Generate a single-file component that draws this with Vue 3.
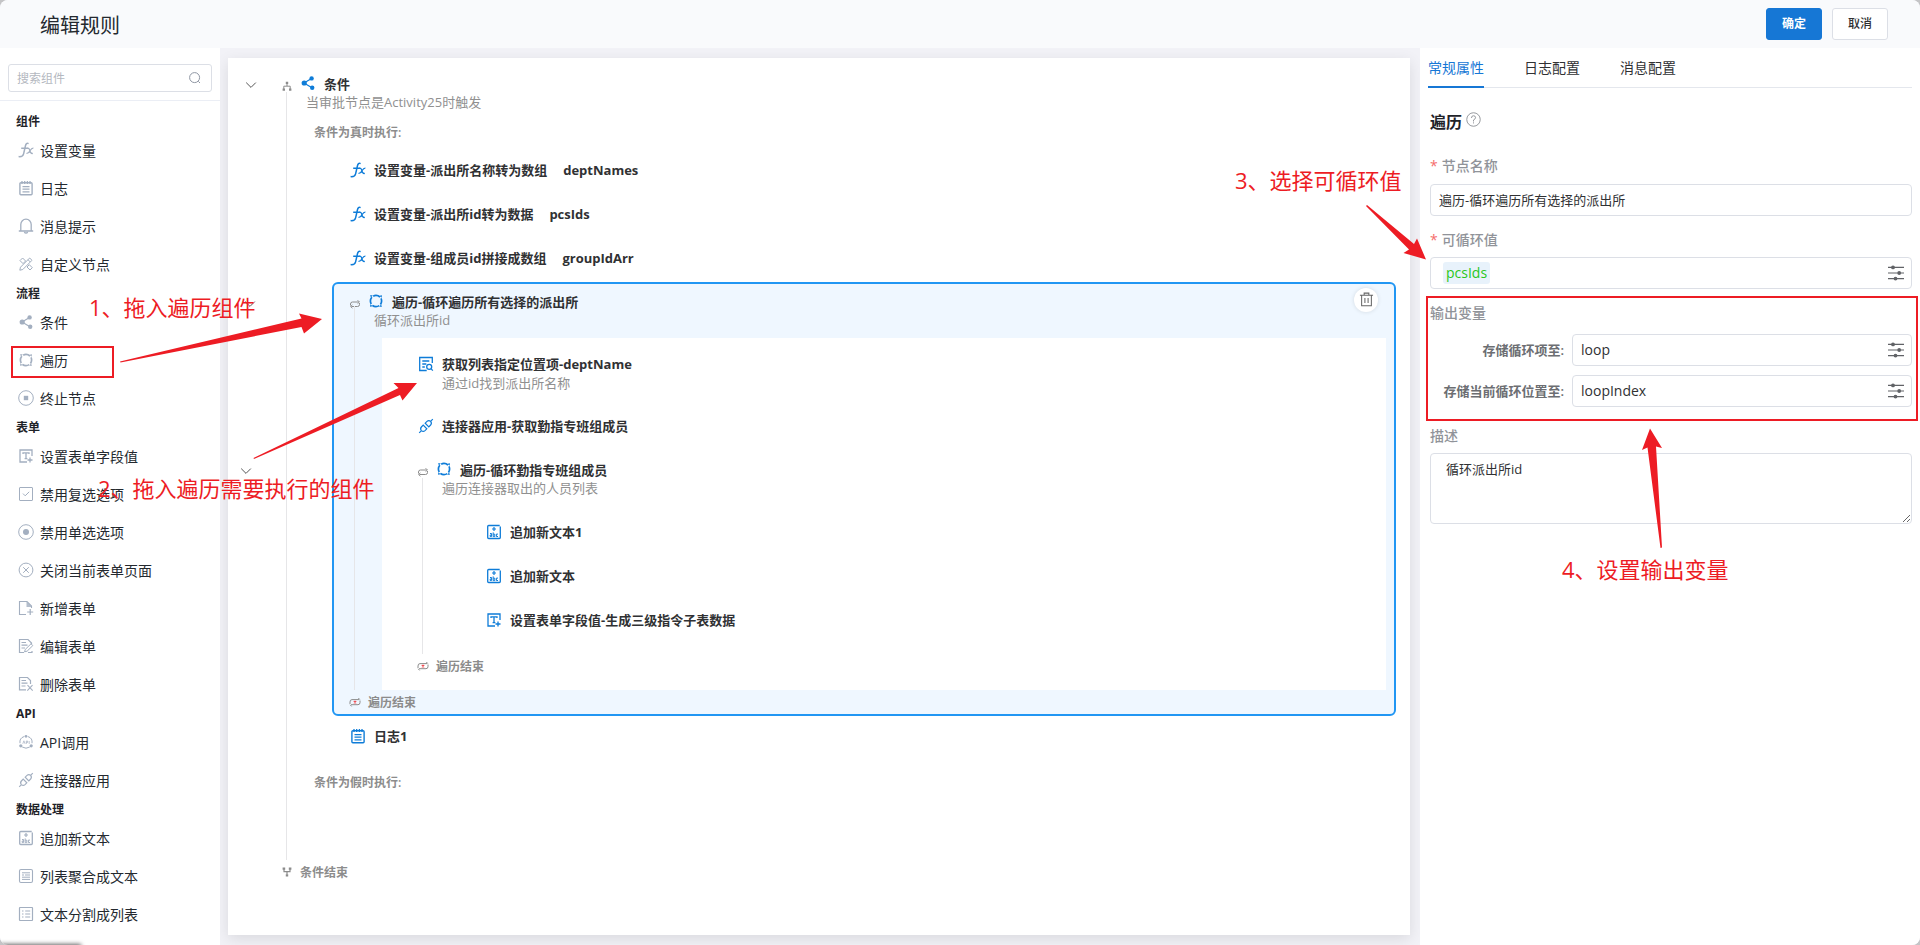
<script setup>
import { ref } from 'vue'

const groups = [
  { title: '组件', items: [
    { icon: 'fx', label: '设置变量' },
    { icon: 'log', label: '日志' },
    { icon: 'bell', label: '消息提示' },
    { icon: 'custom', label: '自定义节点' },
  ] },
  { title: '流程', items: [
    { icon: 'share', label: '条件' },
    { icon: 'loop', label: '遍历' },
    { icon: 'stop', label: '终止节点' },
  ] },
  { title: '表单', items: [
    { icon: 'field', label: '设置表单字段值' },
    { icon: 'check', label: '禁用复选选项' },
    { icon: 'radio', label: '禁用单选选项' },
    { icon: 'close', label: '关闭当前表单页面' },
    { icon: 'formadd', label: '新增表单' },
    { icon: 'formedit', label: '编辑表单' },
    { icon: 'formdel', label: '删除表单' },
  ] },
  { title: 'API', items: [
    { icon: 'api', label: 'API调用' },
    { icon: 'link', label: '连接器应用' },
  ] },
  { title: '数据处理', items: [
    { icon: 'append', label: '追加新文本' },
    { icon: 'list', label: '列表聚合成文本' },
    { icon: 'split', label: '文本分割成列表' },
  ] },
]

const variables = [
  { label: '设置变量-派出所名称转为数组', name: 'deptNames' },
  { label: '设置变量-派出所id转为数据', name: 'pcsIds' },
  { label: '设置变量-组成员id拼接成数组', name: 'groupIdArr' },
]
const innerSteps = [
  { icon: 'append', label: '追加新文本1' },
  { icon: 'append', label: '追加新文本' },
  { icon: 'field', label: '设置表单字段值-生成三级指令子表数据' },
]
const tabs = ['常规属性', '日志配置', '消息配置']
const active = ref(0)
const keyword = ref('')
const nodeName = ref('遍历-循环遍历所有选择的派出所')
const loopVar = ref('loop')
const indexVar = ref('loopIndex')
const desc = ref('循环派出所id')
</script>

<template>
  <div class="app">
    <svg class="defs" aria-hidden="true">
      <symbol id="fx" viewBox="0 0 16 16">
        <path d="M10.6 1.6C8.9.8 7.9 1.8 7.4 4L5.6 11.8C5.1 14 3.9 15 .6 14.6M3.2 6.2h6.6" fill="none" stroke="currentColor" stroke-width="1.5" />
        <path d="M9.2 6.4c1.6-.5 2.1.4 2.6 2.2.5 2 .9 3.3 3 2.8M15.4 6.2c-1.6-.2-2.3.9-3.4 2.6-1 1.7-1.9 2.8-3.5 2.6" fill="none" stroke="currentColor" stroke-width="1.3" />
      </symbol>
      <symbol id="log" viewBox="0 0 16 16">
        <rect x="1.9" y="2.7" width="12.2" height="12" rx="1" fill="none" stroke="currentColor" stroke-width="1.4" />
        <path d="M4 1v3M6.7 1v3M9.4 1v3M12 1v3M4.5 6.7h7M4.5 9.2h7M4.5 11.8h7" fill="none" stroke="currentColor" stroke-width="1.3" />
      </symbol>
      <symbol id="bell" viewBox="0 0 16 16">
        <path d="M.8 13h14.4M2.8 13V6.500a5.2 5.400 0 0 1 10.4 0v6.500M6.2 14.2q1.8 1.6 3.6 0" fill="none" stroke="currentColor" stroke-width="1.3" />
      </symbol>
      <symbol id="custom" viewBox="0 0 16 16">
        <path d="M1.8 14.2l.7-3L11.7 2l2.3 2.3-9.2 9.2zM10 3.7L12.3 6M2 4.6L4.6 2l3 3L5 7.6zM9 11l2.3-2.3 3 3-2.3 2.3z" fill="none" stroke="currentColor" stroke-width="1" />
      </symbol>
      <symbol id="share" viewBox="0 0 16 16">
        <path d="M12 3.2L4 8l8.4 5" fill="none" stroke="currentColor" stroke-width="1.2" />
        <circle cx="4.2" cy="8" r="2.6" fill="currentColor" /><circle cx="11.6" cy="3.4" r="2.2" fill="currentColor" /><circle cx="12.2" cy="12.7" r="2.2" fill="currentColor" />
      </symbol>
      <symbol id="loop" viewBox="0 0 16 16">
        <circle cx="8" cy="8" r="5.6" fill="none" stroke="currentColor" stroke-width="1.7" stroke-dasharray="7.2 1.6" stroke-dashoffset="3.6" />
        <path d="M2.200 2l2.600.4L2.800 4.600zM14 2.200l-.4 2.600-2.200-2zM13.800 14l-2.600-.4 2-2.200zM2 13.800l.4-2.600 2.200 2z" fill="currentColor" />
      </symbol>
      <symbol id="stop" viewBox="0 0 16 16">
        <circle cx="8" cy="8" r="7.3" fill="none" stroke="currentColor" stroke-width="1" /><rect x="5.8" y="5.8" width="4.4" height="4.4" fill="currentColor" />
      </symbol>
      <symbol id="radio" viewBox="0 0 16 16">
        <circle cx="8" cy="8" r="7.3" fill="none" stroke="currentColor" stroke-width="1" /><circle cx="8" cy="8" r="3" fill="currentColor" />
      </symbol>
      <symbol id="close" viewBox="0 0 16 16">
        <circle cx="8" cy="8" r="6.9" fill="none" stroke="currentColor" stroke-width="1" /><path d="M5.2 5.2l5.6 5.6M10.8 5.2l-5.6 5.6" stroke="currentColor" stroke-width="1" />
      </symbol>
      <symbol id="check" viewBox="0 0 16 16">
        <rect x="1.5" y="1.5" width="13" height="13" rx=".5" fill="none" stroke="currentColor" stroke-width="1" /><path d="M5 7.6l2.2 2.2 4-4" fill="none" stroke="currentColor" stroke-width="1" />
      </symbol>
      <symbol id="field" viewBox="0 0 16 16">
        <path d="M14 8V2H2v12h7M5 6V4.8h6V6M8 5v5.5M6.6 10.6h2.8" fill="none" stroke="currentColor" stroke-width="1.3" />
        <path d="M12 9.5v5M9.5 12h5" stroke="currentColor" stroke-width="1.3" />
      </symbol>
      <symbol id="formadd" viewBox="0 0 16 16">
        <path d="M13.5 8V6L9 1.5H1.5v13H8" fill="none" stroke="currentColor" stroke-width="1.1" /><path d="M8.5 1.5L14 7H8.5z" fill="currentColor" opacity=".8" /><path d="M12.2 9v6M9.2 12h6" stroke="currentColor" stroke-width="1.2" />
      </symbol>
      <symbol id="formedit" viewBox="0 0 16 16">
        <path d="M13.5 6V5L10 1.5H1.5v13H6M14 13v1.5h-4M3.5 4.5H8M3.5 7.2h6M3.5 10h3.5" fill="none" stroke="currentColor" stroke-width="1.2" /><path d="M6.5 13.8l.8-2.4L13 5.8l1.8 1.8-5.7 5.6z" fill="none" stroke="currentColor" stroke-width="1" />
      </symbol>
      <symbol id="formdel" viewBox="0 0 16 16">
        <path d="M12.5 8V4.5L9.5 1.5h-8v12.4H8M3.5 4.5H8M3.5 7.2h6M3.5 10h4" fill="none" stroke="currentColor" stroke-width="1.2" /><path d="M9.5 9.2l5.2 5.4M14.5 9.2l-5.2 5.4" stroke="currentColor" stroke-width="1.1" />
      </symbol>
      <symbol id="api" viewBox="0 0 16 16">
        <path d="M6 2.6a6 6 0 0 0-4 6.6M10 2.6a6 6 0 0 1 4 6.6M4.2 13q3.8 2.4 7.6 0" fill="none" stroke="currentColor" stroke-width="1" />
        <circle cx="8" cy="2.3" r="1.4" fill="currentColor" /><circle cx="2.8" cy="11.8" r="1.6" fill="currentColor" /><circle cx="13.2" cy="11.8" r="1.6" fill="currentColor" />
        <path d="M4.8 9.8l1.1-3 1.1 3M8.3 10V7h1.3v1.5H8.3M11.2 7v3" fill="none" stroke="currentColor" stroke-width=".7" />
      </symbol>
      <symbol id="link" viewBox="0 0 16 16">
        <path d="M1.200 14.800l2-2M12.800 3.200l2-2M3.400 12.600a2.700 2.700 0 0 1 0-3.600l1.800-1.800 3.600 3.600-1.800 1.800a2.700 2.700 0 0 1-3.600 0zM12.600 3.400a2.700 2.700 0 0 1 0 3.600l-1.800 1.800-3.600-3.600L9 3.400a2.700 2.700 0 0 1 3.600 0z" fill="none" stroke="currentColor" stroke-width="1.200" />
      </symbol>
      <symbol id="append" viewBox="0 0 16 16">
        <path d="M14.3 2.5v11q0 1-1 1H2.7q-1 0-1-1v-11q0-1 1-1h11" fill="none" stroke="currentColor" stroke-width="1.3" />
        <path d="M8 3v4M6 5h4" stroke="currentColor" stroke-width="1.2" /><path d="M4 9.5h1.6v3H4.2V11h1.4M7.2 8.4v4.2h1.6v-2.4H7.4M12 10.1h-1.6v2.4H12" fill="none" stroke="currentColor" stroke-width="1" />
      </symbol>
      <symbol id="list" viewBox="0 0 16 16">
        <rect x="1.5" y="1.5" width="13" height="13" rx="1.5" fill="none" stroke="currentColor" stroke-width="1.1" /><path d="M4 4.8h8M4 7h2M7 7h5M4 9.2h8M4 11.4h8" stroke="currentColor" stroke-width="1" />
      </symbol>
      <symbol id="split" viewBox="0 0 16 16">
        <rect x="1.5" y="1.5" width="13" height="13" rx=".5" fill="none" stroke="currentColor" stroke-width="1.2" /><path d="M4 5h1.5M7.2 5h5M4 8h1.5M7.2 8h5M4 11h1.5M7.2 11h5" stroke="currentColor" stroke-width="1.2" />
      </symbol>
      <symbol id="find" viewBox="0 0 16 16">
        <path d="M14.3 7V1.5H1.7v13h7M4.3 5h7M4.3 8h4M4.3 11h2.5" fill="none" stroke="currentColor" stroke-width="1.3" /><circle cx="11.2" cy="10.8" r="2.5" fill="none" stroke="currentColor" stroke-width="1.3" /><path d="M13 12.6l1.8 2" stroke="currentColor" stroke-width="1.3" />
      </symbol>
      <symbol id="repeat" viewBox="0 0 12 12">
        <path d="M1.5 7.5V6q0-2 2-2h6M8.6 2.2L10.4 4 8.6 5.6M10.5 5v1.5q0 2-2 2h-6M3.4 6.9L1.6 8.5l1.8 1.7" fill="none" stroke="#8c8c8c" stroke-width="1" />
      </symbol>
      <symbol id="repeatend" viewBox="0 0 12 12">
        <path d="M1 8V6q0-2.400 2-2.400h7M9.400 2l1.400 1.600M11 4.500v2q0 2.200-2 2.200H2M2.600 10.400L1.200 8.800" fill="none" stroke="#8c8c8c" stroke-width="1" /><path d="M4.800 5l2.400 2.400M7.200 5L4.800 7.400" stroke="#f0494e" stroke-width="1.1" />
      </symbol>
      <symbol id="branch" viewBox="0 0 12 12">
        <path d="M6 3v3M2.8 9V6.2h6.4V9" fill="none" stroke="#8c8c8c" stroke-width="1" /><path d="M4.8 1.8h2.4V4H4.8zM1.6 8.6H4v2.2H1.6zM8 8.6h2.4v2.2H8z" fill="#8c8c8c" />
      </symbol>
      <symbol id="merge" viewBox="0 0 12 12">
        <path d="M3 3v2.600h6V3M6 5.600v3" fill="none" stroke="#8c8c8c" stroke-width="1.2" /><path d="M1.600 1.6h2.6v2.2H1.600zM7.800 1.6h2.6v2.2H7.800zM4.8 8.2h2.4v2.2H4.8z" fill="#8c8c8c" />
      </symbol>
      <symbol id="sliders" viewBox="0 0 16 16">
        <path d="M0 2.4h16M0 8h16M0 13.6h16" stroke="#606266" stroke-width="1.2" /><circle cx="5" cy="2.4" r="1.9" fill="#606266" /><circle cx="11.2" cy="8" r="1.9" fill="#606266" /><circle cx="7.5" cy="13.6" r="1.9" fill="#606266" />
      </symbol>
      <symbol id="chevron" viewBox="0 0 12 12"><path d="M1.2 3.6L6 8.4l4.8-4.8" fill="none" stroke="#555" stroke-width="1" /></symbol>
    </svg>

    <header class="top">
      <h1>编辑规则</h1>
      <div class="actions">
        <button class="btn primary">确定</button>
        <button class="btn">取消</button>
      </div>
    </header>

    <div class="main">
      <aside class="side">
        <div class="searchwrap">
          <div class="search">
            <input v-model="keyword" placeholder="搜索组件" aria-label="搜索组件" />
            <svg viewBox="0 0 12 12"><circle cx="5.6" cy="5.6" r="5" fill="none" stroke="#8f96a3" /><path d="M9.300 9.300l1.700 1.700" stroke="#8f96a3" /></svg>
          </div>
        </div>
        <nav class="groups">
          <section v-for="g in groups" :key="g.title">
            <h2>{{ g.title }}</h2>
            <ul>
              <li v-for="i in g.items" :key="i.label"><svg><use :href="'#' + i.icon" /></svg>{{ i.label }}</li>
            </ul>
          </section>
        </nav>
      </aside>

      <main class="canvas">
        <div class="board">
          <svg class="fold f1"><use href="#chevron" /></svg>
          <svg class="fold f2"><use href="#chevron" /></svg>
          <svg class="fold f3"><use href="#chevron" /></svg>
          <div class="block">
            <div class="head">
              <svg class="mark"><use href="#branch" /></svg>
              <div class="title"><svg><use href="#share" /></svg>条件</div>
              <p>当审批节点是Activity25时触发</p>
            </div>
            <div class="rail">
              <div class="cond">条件为真时执行:</div>
              <div class="kids">
                <div v-for="v in variables" :key="v.name" class="leaf">
                  <svg><use href="#fx" /></svg><span>{{ v.label }}</span><span class="var">{{ v.name }}</span>
                </div>
                <div class="block selected">
                  <button class="del" aria-label="删除">
                    <svg viewBox="0 0 16 16"><path d="M1 3.5h14M5.5 3V1.2h5V3M2.8 3.5v11.2h10.4V3.5M6.3 6.3v5.4M9.7 6.3v5.4" fill="none" stroke="#666" stroke-width="1.1" /></svg>
                  </button>
                  <div class="head">
                    <svg class="mark"><use href="#repeat" /></svg>
                    <div class="title"><svg><use href="#loop" /></svg>遍历-循环遍历所有选择的派出所</div>
                    <p>循环派出所id</p>
                  </div>
                  <div class="rail">
                    <div class="body">
                      <div class="leaf tall">
                        <svg><use href="#find" /></svg><span>获取列表指定位置项-deptName</span>
                        <p>通过id找到派出所名称</p>
                      </div>
                      <div class="leaf"><svg><use href="#link" /></svg><span>连接器应用-获取勤指专班组成员</span></div>
                      <div class="block">
                        <div class="head">
                          <svg class="mark"><use href="#repeat" /></svg>
                          <div class="title"><svg><use href="#loop" /></svg>遍历-循环勤指专班组成员</div>
                          <p>遍历连接器取出的人员列表</p>
                        </div>
                        <div class="rail">
                          <div class="kids inner">
                            <div v-for="s in innerSteps" :key="s.label" class="leaf"><svg><use :href="'#' + s.icon" /></svg><span>{{ s.label }}</span></div>
                          </div>
                        </div>
                        <div class="end"><svg><use href="#repeatend" /></svg>遍历结束</div>
                      </div>
                    </div>
                  </div>
                  <div class="end"><svg><use href="#repeatend" /></svg>遍历结束</div>
                </div>
                <div class="leaf"><svg><use href="#log" /></svg><span>日志1</span></div>
              </div>
              <div class="cond false">条件为假时执行:</div>
            </div>
            <div class="end"><svg><use href="#merge" /></svg>条件结束</div>
          </div>
        </div>
      </main>

      <aside class="props">
        <div class="tabs" role="tablist">
          <button v-for="(t, n) in tabs" :key="t" role="tab" :aria-selected="active === n" :class="{ on: active === n }" @click="active = n">{{ t }}</button>
        </div>
        <h2 class="ptitle">遍历<svg viewBox="0 0 16 16"><circle cx="8" cy="8" r="7.2" fill="none" stroke="#909399" /><path d="M5.8 6.4Q5.8 4 8 4t2.2 2.1Q10.2 7.300 8 8.500v1.600M8 11v1.200" fill="none" stroke="#909399" /></svg></h2>
        <label class="lab" for="nodename"><i>*</i>节点名称</label>
        <div class="box"><input id="nodename" v-model="nodeName" class="small" /></div>
        <div class="lab second"><i>*</i>可循环值</div>
        <div class="box"><span class="tag">pcsIds</span><svg><use href="#sliders" /></svg></div>
        <div class="output">
          <div class="lab">输出变量</div>
          <div class="row"><label for="v1">存储循环项至:</label><div class="box"><input id="v1" v-model="loopVar" /><svg><use href="#sliders" /></svg></div></div>
          <div class="row"><label for="v2">存储当前循环位置至:</label><div class="box"><input id="v2" v-model="indexVar" /><svg><use href="#sliders" /></svg></div></div>
        </div>
        <label class="lab" for="desc">描述</label>
        <textarea id="desc" v-model="desc"></textarea>
      </aside>
    </div>

    <div class="notes left">
      <svg viewBox="0 0 480 600">
        <rect x="12" y="347" width="101" height="30" fill="none" stroke="#ed1c24" stroke-width="2" />
        <path d="M120 361.500L301.500 318.500 299 313.500 322 319 304 333.500 301.500 327 120.500 362.500z" fill="#ed1c24" />
        <path d="M253.500 458L398.500 388 393.500 383 417 383 402.500 400.500 400 395 254 459z" fill="#ed1c24" />
      </svg>
      <span class="n1">1、拖入遍历组件</span>
      <span class="n2">2、拖入遍历需要执行的组件</span>
    </div>
    <div class="notes right">
      <svg viewBox="1220 0 700 600">
        <path d="M1367 205L1414 244 1417 238.500 1426 259.500 1403.500 253 1409 249.500 1366 206z" fill="#ed1c24" />
        <path d="M1650 428.500L1662 448 1656 446.500 1662 547.500 1660.500 548 1647.500 447.500 1642 450z" fill="#ed1c24" />
      </svg>
      <span class="n3">3、选择可循环值</span>
      <span class="n4">4、设置输出变量</span>
    </div>
    <div class="status"></div>
  </div>
</template>

<style>
body { background: #c4c4c6; }
</style>

<style scoped>
* { box-sizing: border-box; margin: 0; padding: 0; }
.app {
  position: relative;
  display: flex;
  flex-direction: column;
  height: 100vh;
  overflow: hidden;
  border-radius: 8px;
  background: #f2f2f7;
  color: #303133;
  font-family: "Open Sans", "Noto Sans CJK SC", sans-serif;
  font-size: 14px;
}
.defs { position: absolute; width: 0; height: 0; }
button, input, textarea { font: inherit; color: inherit; outline: none; }
ul { list-style: none; }

.top { display: flex; align-items: center; justify-content: space-between; flex: none; height: 48px; padding: 0 32px 0 40px; background: #f9fafc; }
.top h1 { font-size: 20px; font-weight: 400; color: #24292f; }
.actions { display: flex; gap: 10px; }
.btn { width: 56px; height: 32px; border: 1px solid #dcdfe6; border-radius: 3px; background: #fff; font-size: 12px; font-weight: 500; line-height: 30px; }
.btn.primary { border-color: #1677d5; background: #1677d5; color: #fff; font-weight: 700; }

.main { display: flex; flex: 1; min-height: 0; }
.side { flex: none; width: 220px; background: #fff; overflow: hidden; }
.searchwrap { padding: 16px 8px 8px; border-bottom: 1px solid #ebeef5; }
.search { display: flex; align-items: center; height: 28px; padding: 0 10px 0 8px; border: 1px solid #dcdfe6; border-radius: 3px; }
.search input { flex: 1; min-width: 0; border: 0; font-size: 12px; background: none; }
.search input::placeholder { color: #b4b8c0; opacity: 1; }
.search svg { width: 12px; height: 12px; }
.groups { padding-top: 11px; }
.groups h2 { height: 20px; padding-left: 16px; font-size: 12px; font-weight: 700; line-height: 20px; color: #1f2329; }
.groups li { display: flex; align-items: center; gap: 6px; height: 38px; padding: 0 0 2px 18px; color: #24292f; }
.groups li svg { width: 16px; height: 16px; color: #a3afc0; }

.canvas { flex: 1; min-width: 0; padding: 10px 10px 10px 8px; overflow: hidden; }
.board { position: relative; height: 100%; padding: 4px 14px 0 42px; background: #fff; box-shadow: 0 4px 14px rgba(0, 0, 0, .1); }
.fold { position: absolute; width: 12px; height: 12px; }
.f1 { left: 17px; top: 21px; }
.f2 { left: 16px; top: 240px; }
.f3 { left: 12px; top: 407px; }
.head { position: relative; height: 62px; padding-top: 11px; }
.mark { position: absolute; left: 11px; top: 18px; width: 12px; height: 12px; }
.title { display: flex; align-items: center; gap: 8px; height: 20px; padding-left: 30px; font-size: 13px; font-weight: 700; }
.title svg { width: 16px; height: 16px; color: #0e7cd8; }
.head p { padding-left: 36px; }
.head p, .leaf p { height: 18px; font-size: 13px; line-height: 18px; color: #909090; }
.rail { position: relative; }
.rail::before { content: ""; position: absolute; left: 16px; top: -32px; bottom: 0; width: 1px; background: #e6e6e8; }
.cond { height: 24px; padding-left: 44px; font-size: 12px; font-weight: 600; line-height: 18px; color: #8c8c8c; }
.cond.false { height: 86px; margin-top: 16px; }
.kids { padding-left: 62px; }
.kids.inner { padding: 0 0 12px 68px; }
.leaf { display: flex; flex-wrap: wrap; align-items: center; align-content: flex-start; height: 44px; padding: 12px 0 0 12px; font-size: 13px; font-weight: 700; line-height: 20px; }
.kids > .leaf { padding-left: 18px; }
.kids.inner > .leaf { padding-left: 12px; }
.leaf svg { width: 16px; height: 16px; margin-right: 8px; color: #0e7cd8; }
.leaf .var { margin-left: 16px; }
.leaf.tall { height: 62px; }
.leaf p { flex-basis: 100%; padding-left: 24px; font-weight: 400; }
.end { display: flex; align-items: center; gap: 7px; height: 24px; padding-left: 11px; font-size: 12px; font-weight: 600; color: #8c8c8c; }
.end svg { width: 12px; height: 12px; }
.selected { position: relative; margin: 2px 0 -2px; border: 2px solid #2196f3; border-radius: 6px; background: #eff7ff; }
.selected > .head { height: 54px; padding: 7px 0 0 4px; }
.selected > .head .mark { left: 15px; top: 14px; }
.selected > .rail::before { left: 20px; }
.selected > .end { padding-left: 15px; }
.body { margin: 0 8px 0 48px; padding: 4px 0 12px 24px; background: #fff; }
.del { position: absolute; right: 16px; top: 4px; z-index: 1; display: flex; align-items: center; justify-content: center; width: 24px; height: 24px; padding-bottom: 2px; border: 0; border-radius: 50%; background: #fff; box-shadow: 0 0 4px rgba(0, 0, 0, .12); }
.del svg { width: 15px; height: 15px; }

.props { flex: none; width: 500px; padding: 0 8px 0 10px; background: #fff; }
.tabs { display: flex; gap: 40px; height: 40px; margin-left: -2px; box-shadow: inset 0 -1px #e4e7ed; }
.tabs button { height: 40px; padding-top: 2px; border: 0; border-bottom: 2px solid transparent; background: none; line-height: 36px; }
.tabs .on { border-color: #1677d5; color: #1677d5; }
.ptitle { display: flex; align-items: center; gap: 4px; height: 24px; margin: 21px 0 23px; font-size: 16px; font-weight: 600; color: #1f2329; }
.ptitle svg { width: 15px; height: 15px; margin-bottom: 4px; }
.lab { display: block; height: 20px; margin-bottom: 8px; font-size: 14px; font-weight: 500; line-height: 20px; color: #909399; }
.lab i { margin-right: 4px; font-style: normal; color: #f56c6c; }
.second { margin: 14px 0 7px; }
.box { display: flex; align-items: center; flex: 1; min-width: 0; height: 32px; padding: 0 7px 0 8px; border: 1px solid #dcdfe6; border-radius: 4px; }
.box input { flex: 1; min-width: 0; padding-bottom: 2px; border: 0; background: none; }
.box input.small { font-size: 13px; }
.box svg { width: 16px; height: 16px; margin-left: auto; }
.tag { height: 22px; margin-left: 4px; padding: 0 3px; border-radius: 3px; background: #e8f2fb; color: #2ac71c; line-height: 22px; }
.output { margin: 7px -6px 5px -4px; padding: 5px 4px 12px 2px; border: 2px solid #ed1c24; }
.output .lab { margin-bottom: 11px; }
.row { display: flex; align-items: center; gap: 8px; }
.row + .row { margin-top: 9px; }
.row label { width: 134px; padding-bottom: 2px; font-size: 13px; font-weight: 600; text-align: right; color: #6c6e72; }
textarea { display: block; width: 100%; height: 71px; margin-top: -1px; padding: 5px 15px; border: 1px solid #dcdfe6; border-radius: 4px; font-size: 13px; line-height: 20px; resize: vertical; }

.notes { position: absolute; top: 0; height: 600px; pointer-events: none; font-size: 22px; line-height: 32px; color: #ed1c24; white-space: nowrap; }
.notes svg { display: block; width: 100%; height: 100%; }
.notes span { position: absolute; }
.left { left: 0; width: 480px; }
.right { right: 0; width: 700px; }
.n1 { left: 89px; top: 291px; }
.n2 { left: 98px; top: 472px; }
.n3 { left: 15px; top: 164px; }
.n4 { left: 342px; top: 553px; }
.status { position: absolute; left: 0; bottom: -4px; width: 80px; height: 4px; box-shadow: 0 0 4px 1px rgba(0, 0, 0, .6); }
</style>
